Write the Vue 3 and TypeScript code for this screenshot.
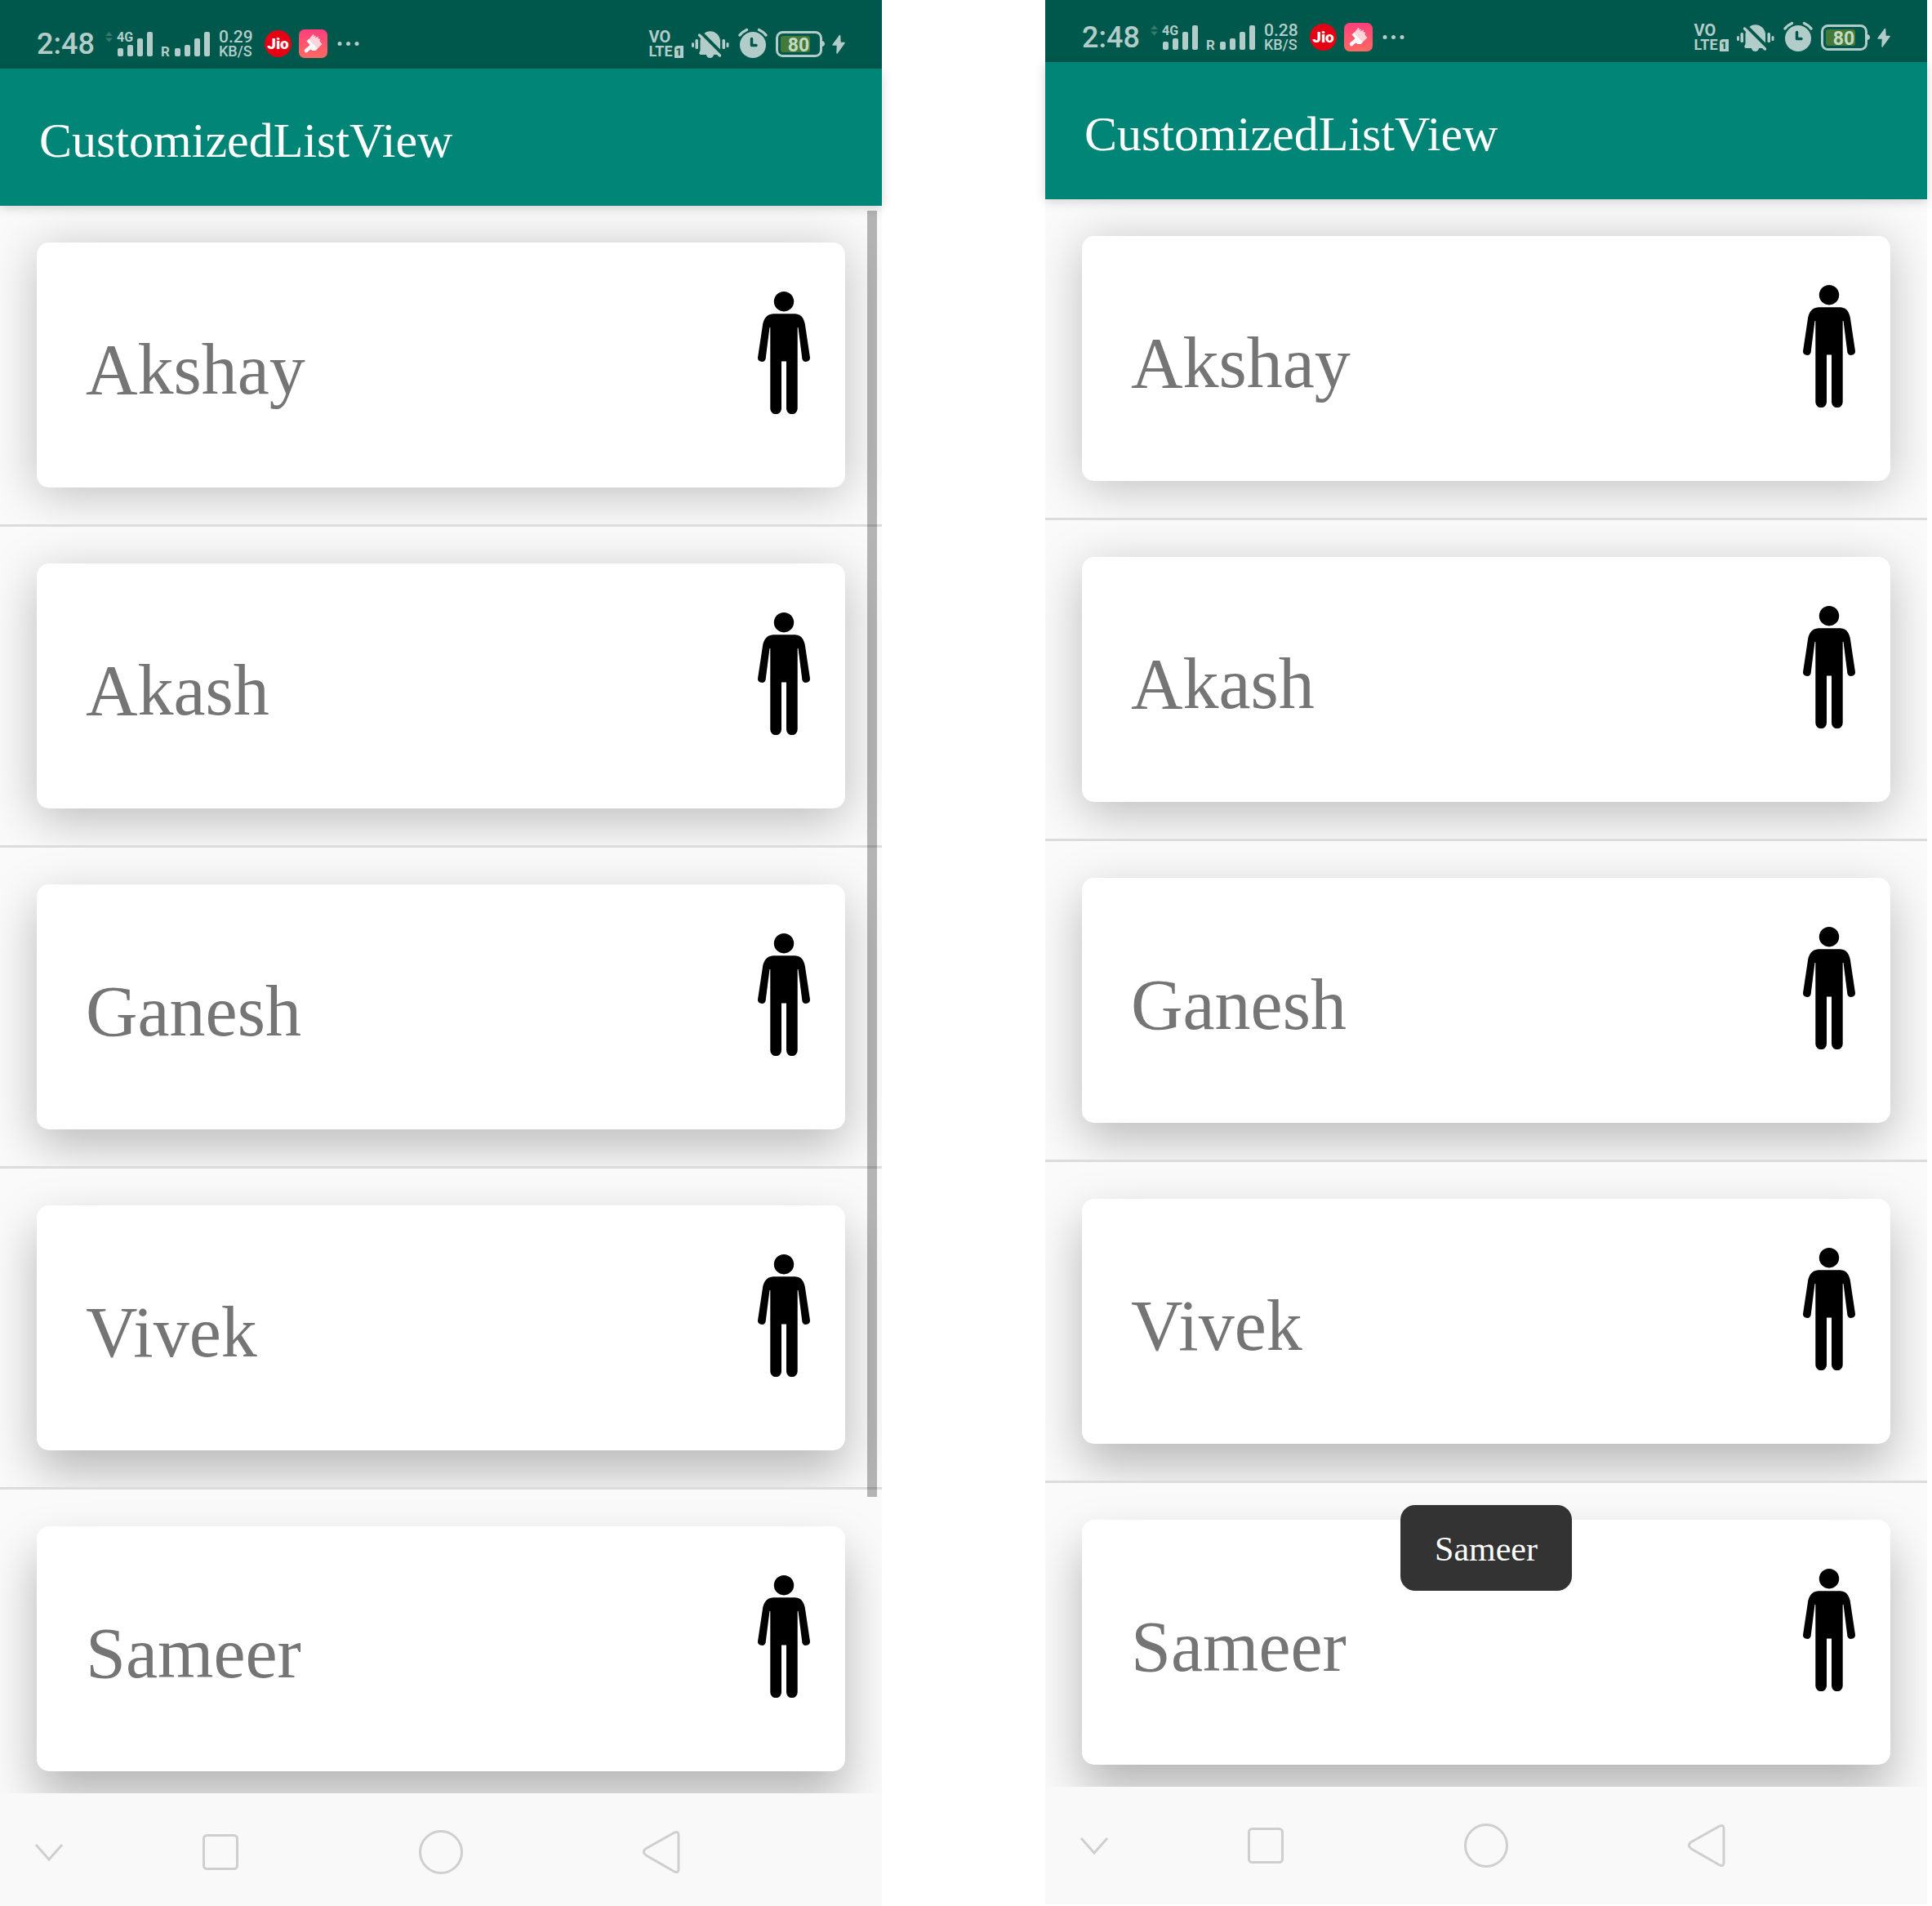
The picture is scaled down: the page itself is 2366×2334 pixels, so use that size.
<script setup lang="ts">
interface Phone {
  id: string
  speed: string
  cropped: boolean
  scrollbar: boolean
  toast: string | null
}

const names: string[] = ['Akshay', 'Akash', 'Ganesh', 'Vivek', 'Sameer']

const phones: Phone[] = [
  { id: 'list', speed: '0.29', cropped: false, scrollbar: true, toast: null },
  { id: 'tapped', speed: '0.28', cropped: true, scrollbar: false, toast: 'Sameer' },
]

// The light sits above the screen, so cards further down cast a longer shadow.
function cardShadow(index: number): string {
  const offset = 8 + index * 6
  const alpha = (24 + index) / 100
  return `0 ${offset}px 60px rgba(0, 0, 0, ${alpha})`
}
</script>

<template>
  <main class="screens">
    <section v-for="phone in phones" :key="phone.id" class="phone" :class="{ cropped: phone.cropped }">
      <div class="status">
        <div class="status-side">
          <span class="clock">2:48</span>
          <svg class="signal" width="132" height="36" viewBox="126 36 132 36" aria-hidden="true">
            <g fill="#35796f">
              <path d="M129 44 L133.500 39 L138 44z" />
              <path d="M129 46.500 L133.500 51.500 L138 46.500z" />
            </g>
            <g fill="#b2cdc9">
              <text x="143" y="51" font-size="16" font-weight="700">4G</text>
              <rect x="144" y="59" width="7" height="10" rx="2" />
              <rect x="156" y="55" width="7" height="14" rx="2" />
              <rect x="168" y="47" width="7" height="22" rx="2" />
              <rect x="180" y="39" width="7" height="30" rx="2" />
              <text x="197" y="69" font-size="17" font-weight="700">R</text>
              <rect x="214" y="59" width="7" height="10" rx="2" />
              <rect x="226" y="55" width="7" height="14" rx="2" />
              <rect x="238" y="47" width="7" height="22" rx="2" />
              <rect x="250" y="39" width="7" height="30" rx="2" />
            </g>
          </svg>
          <span class="speed"><span class="rate">{{ phone.speed }}</span><span class="unit">KB/S</span></span>
          <svg width="33" height="36" viewBox="0 0 33 36" aria-hidden="true">
            <circle cx="16.500" cy="17.500" r="16.500" fill="#e60014" />
            <text x="16.500" y="24" text-anchor="middle" font-size="19" font-weight="900" fill="#fff">Jio</text>
          </svg>
          <svg class="brush" width="35" height="36" viewBox="0 0 35 36" aria-hidden="true">
            <defs>
              <linearGradient :id="'brush-' + phone.id" x1="0" y1="0" x2="0" y2="1">
                <stop offset="0" stop-color="#ff3f7d" />
                <stop offset="1" stop-color="#ff6a60" />
              </linearGradient>
            </defs>
            <rect width="35" height="35" rx="7" :fill="'url(#brush-' + phone.id + ')'" />
            <path d="M11.500 13 L17.500 6 L19 7 L17.500 9 L21 7.500 L20 10.500 L24 8.500 L23.500 11.500 L26 11.500 L25.500 14.500 L28.500 18 L22.500 24z" fill="#ffd3da" />
            <path d="M9.500 14.500 L12 12 L23 23.500 L20.500 26 H16.500 L12.500 23 L13.500 19z" fill="#fff" />
            <path d="M9 26 L15.500 20.500" stroke="#fff" stroke-width="4.500" stroke-linecap="round" />
          </svg>
          <svg width="27" height="36" viewBox="0 0 27 36" fill="#b2cdc9" aria-hidden="true">
            <circle cx="3" cy="17.500" r="2.500" />
            <circle cx="13.500" cy="17.500" r="2.500" />
            <circle cx="24" cy="17.500" r="2.500" />
          </svg>
        </div>
        <div class="status-side icons">
          <span class="volte">
            <span>VO</span>
            <span class="lte">LTE<span class="sim">1</span></span>
          </span>
          <svg width="48" height="36" viewBox="0 0 48 36" aria-hidden="true">
            <g fill="#b2cdc9">
              <rect x="1" y="16" width="3" height="6" rx="1.500" />
              <rect x="5.500" y="12" width="3.500" height="12" rx="1.500" />
              <rect x="38.500" y="12" width="3.500" height="12" rx="1.500" />
              <rect x="43.500" y="16" width="3" height="6" rx="1.500" />
              <path d="M11.500 14 A12.300 13 0 0 1 36 14 V27 L33 31 H28 A4.500 4 0 0 1 19 31 H11.500 Q9.500 30 10.500 28 L11.500 26z" />
            </g>
            <path d="M10.500 2 L38.500 30" stroke="#00574b" stroke-width="4.500" />
            <path d="M10.500 7 L35.500 32" stroke="#b2cdc9" stroke-width="3.500" stroke-linecap="round" />
          </svg>
          <svg width="38" height="38" viewBox="0 0 38 38" fill="none" aria-hidden="true">
            <circle cx="19" cy="21" r="16" fill="#b2cdc9" />
            <path d="M17.500 13.500 V21.500 H23" stroke="#00574b" stroke-width="3.500" stroke-linecap="round" stroke-linejoin="round" />
            <path d="M3 9 Q6 5 11.500 2.500 M26.500 2.500 Q32 5 35 9" stroke="#b2cdc9" stroke-width="3.500" stroke-linecap="round" />
          </svg>
          <svg width="60" height="36" viewBox="0 0 60 36" aria-hidden="true">
            <rect x="1.500" y="3.500" width="54" height="29" rx="7" fill="none" stroke="#b2cdc9" stroke-width="3" />
            <path d="M57 14 Q60 15 60 17.500 Q60 20 57 21z" fill="#b2cdc9" />
            <rect x="6" y="8" width="36" height="20" rx="3" fill="#437a3a" />
            <text x="28" y="26.500" text-anchor="middle" font-size="23" font-weight="700" fill="#c4d9c2">80</text>
          </svg>
          <svg width="16" height="36" viewBox="0 0 16 36" aria-hidden="true">
            <path d="M9.500 7.500 L1 19 H6.500 L6 29 L15 16.500 H10z" fill="#b2cdc9" stroke="#b2cdc9" stroke-width="1.500" stroke-linejoin="round" />
          </svg>
        </div>
      </div>

      <header class="app-bar">
        <h1>CustomizedListView</h1>
      </header>

      <div class="list-wrap">
        <ul class="list">
          <li v-for="(name, i) in names" :key="name" class="row">
            <div class="card" :style="{ boxShadow: cardShadow(i) }">
              <span class="name">{{ name }}</span>
              <svg class="person" width="150" height="150" viewBox="0 0 150 150" aria-hidden="true">
                <circle cx="75" cy="12.200" r="12.200" />
                <path d="M62 27.300 H89 C96.500 27.600 100 34 101 41 L107 81 A4.900 4.900 0 0 1 97.400 82.400 L92.500 44 H91.700 V143.300 A6.800 6.800 0 0 1 78 143.300 V85.500 H72 V143.300 A6.800 6.800 0 0 1 58.300 143.300 V44 H57.500 L52.600 82.400 A4.900 4.900 0 0 1 43 81 L49 41 C50 34 54 27.600 62 27.300z" />
              </svg>
            </div>
          </li>
        </ul>
        <div v-if="phone.scrollbar" class="scrollbar"></div>
      </div>

      <nav class="nav" aria-label="System">
        <button type="button" class="hide" aria-label="Hide navigation">
          <svg width="36" height="54" viewBox="0 0 36 54"><path d="M2 18 L18 36 L34 18" /></svg>
        </button>
        <button type="button" aria-label="Recent apps">
          <svg width="54" height="54" viewBox="0 0 54 54"><rect x="6.500" y="6.500" width="41" height="41" rx="4" /></svg>
        </button>
        <button type="button" aria-label="Home">
          <svg width="54" height="54" viewBox="0 0 54 54"><circle cx="27" cy="27" r="25.500" /></svg>
        </button>
        <button type="button" aria-label="Back">
          <svg width="54" height="54" viewBox="0 0 54 54"><path d="M43 3 L7.500 23 Q3.500 26.500 7.500 30.500 L43 51 Q48 53 48 48 V6 Q48 1 43 3z" /></svg>
        </button>
      </nav>

      <div v-if="phone.toast" class="toast" role="status">{{ phone.toast }}</div>
    </section>
  </main>
</template>

<style>
body {
  margin: 0;
  background: #fff;
}
</style>

<style scoped>
.screens {
  display: grid;
  grid-template-columns: minmax(0, 1fr) minmax(0, 1fr);
  align-items: start;
  column-gap: 200px;
  padding-right: 6px;
  font-family: "Liberation Serif", serif;
}

.phone {
  position: relative;
  background: #fafafa;
}

.status {
  display: flex;
  justify-content: space-between;
  padding: 36px 45px 12px;
  background: #00574b;
  color: #b2cdc9;
  font-family: Roboto, sans-serif;
}

.cropped .status {
  padding-top: 28px;
}

.status-side {
  display: flex;
  align-items: flex-end;
  height: 36px;
}

.status svg {
  display: block;
  flex: none;
}

.icons {
  gap: 9px;
}

.clock {
  width: 81px;
  font-size: 36px;
  font-weight: 500;
  line-height: 36px;
}

.speed {
  display: flex;
  flex-direction: column;
  width: 42px;
  margin: 0 14px 0 10px;
  font-weight: 500;
  line-height: 18px;
}

.rate {
  font-size: 21px;
}

.unit {
  font-size: 18px;
}

.brush {
  margin: 0 12px 0 9px;
}

.volte {
  display: flex;
  flex-direction: column;
  font-size: 20px;
  font-weight: 700;
  line-height: 18px;
}

.lte {
  display: flex;
  align-items: center;
  gap: 2px;
  font-size: 18px;
}

.sim {
  padding: 0 2px;
  border-radius: 4px 0 0 0;
  background: #b2cdc9;
  color: #00574b;
  font-size: 13px;
  line-height: 15px;
}

.app-bar {
  position: relative;
  z-index: 1;
  padding: 48px 48px 40px;
  background: #008577;
  box-shadow: 0 3px 12px rgba(0, 0, 0, 0.16);
}

h1 {
  margin: 0;
  color: #fff;
  font-size: 60px;
  font-weight: 400;
  line-height: 80px;
}

.list-wrap {
  position: relative;
}

.list {
  margin: 0;
  padding: 0;
  list-style: none;
}

.row {
  overflow: hidden;
  padding: 45px;
  border-bottom: 3px solid #dcdcdc;
}

.row:last-child {
  padding-bottom: 27px;
  border-bottom: 0;
}

.card {
  display: flex;
  justify-content: space-between;
  align-items: flex-start;
  padding: 60px 0 90px 60px;
  border-radius: 15px;
  background: #fff;
}

.name {
  padding-top: 46px;
  color: #757575;
  font-size: 88px;
  line-height: 100px;
}

.person {
  display: block;
  flex: none;
}

.scrollbar {
  position: absolute;
  top: 6px;
  right: 6px;
  width: 12px;
  height: 81%;
  background: rgba(0, 0, 0, 0.28);
}

.nav {
  display: grid;
  grid-template-columns: 1fr 2fr 2fr 2fr 1fr;
  padding: 45px 0 39px;
  background: #f9f9f9;
}

.cropped .nav {
  padding-bottom: 45px;
}

.nav button {
  display: flex;
  justify-content: center;
  padding: 0;
  border: 0;
  background: none;
}

.nav .hide {
  justify-content: flex-start;
  padding-left: 42px;
}

.nav svg {
  display: block;
  fill: none;
  stroke: #cfcfcf;
  stroke-width: 3;
}

.toast {
  position: absolute;
  z-index: 2;
  bottom: 384px;
  left: 50%;
  transform: translateX(-50%);
  padding: 32px 42px 28px;
  border-radius: 18px;
  background: #333;
  color: #fff;
  font-size: 42px;
  line-height: 45px;
}
</style>
